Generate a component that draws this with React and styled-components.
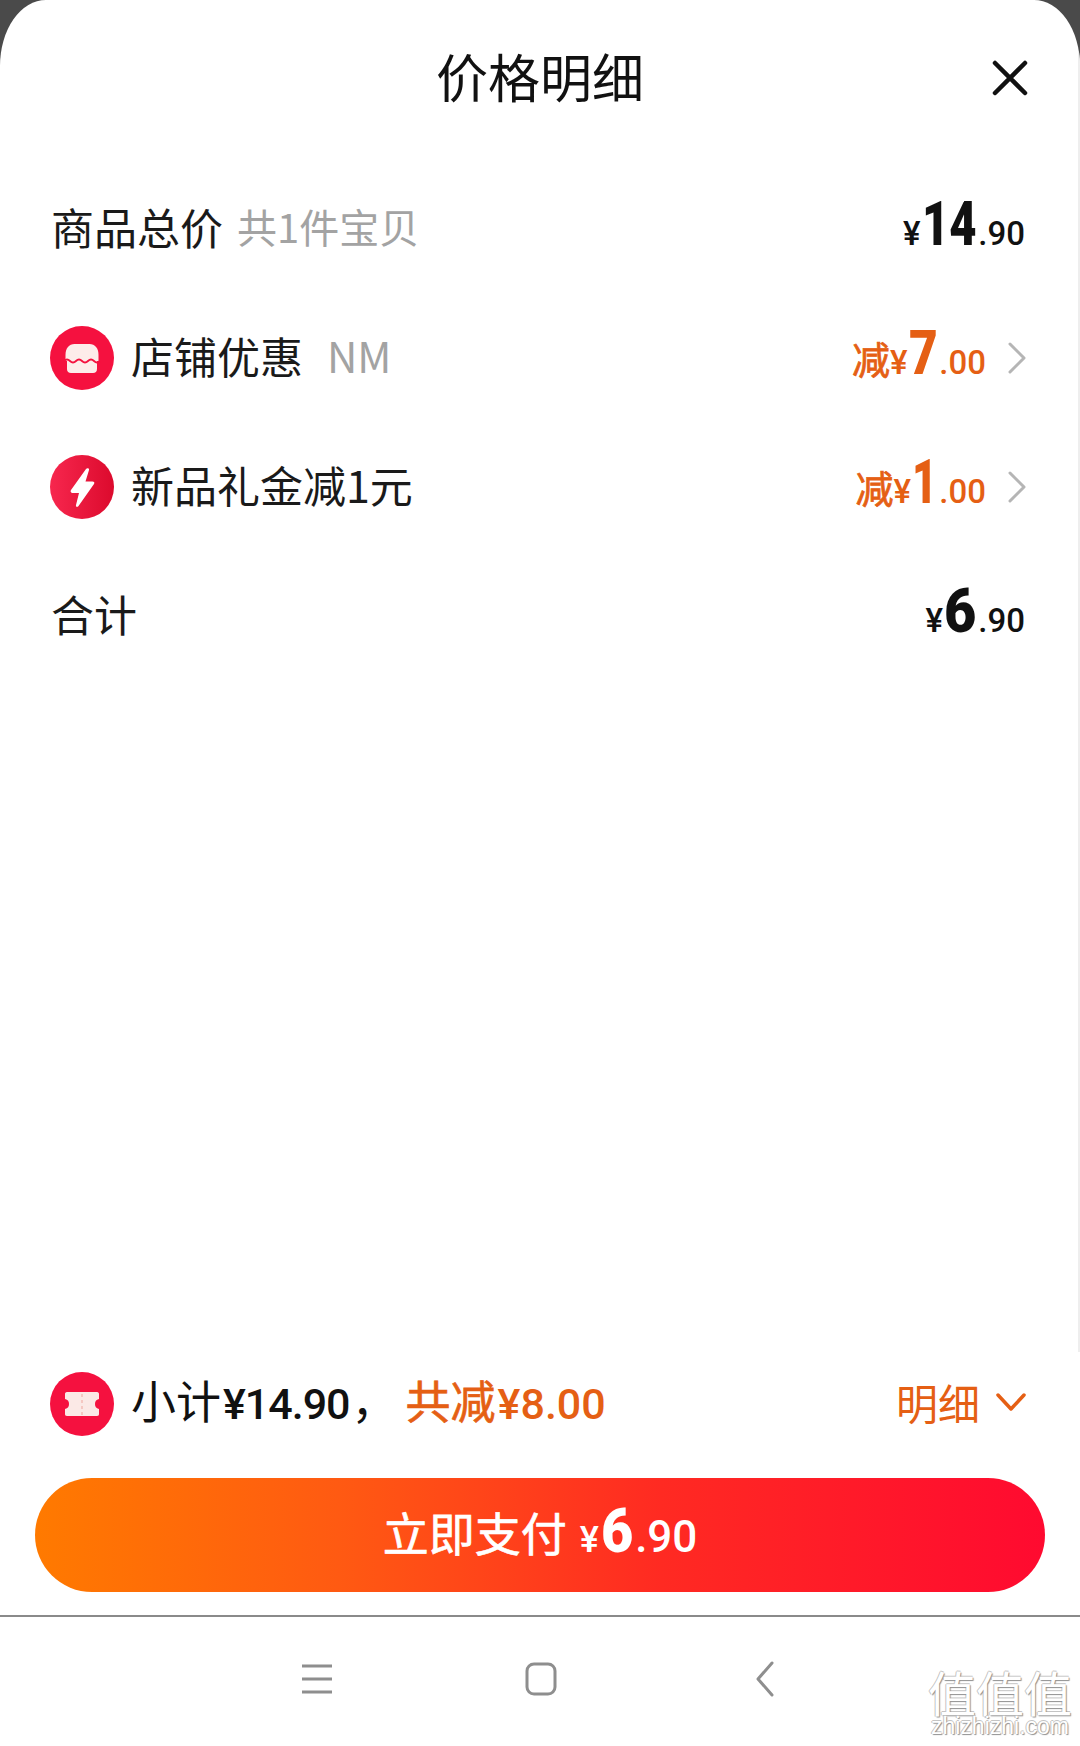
import React from 'react';
import styled, { createGlobalStyle } from 'styled-components';

const GlobalStyle = createGlobalStyle`
  html, body {
    margin: 0;
    padding: 0;
    background: #4a4a4a;
    font-family: "Noto Sans CJK SC", "Noto Sans", sans-serif;
  }
`;

const ORANGE = '#e55f14';
const NUM_FONT = `"Roboto", "Liberation Sans", sans-serif`;

const Sheet = styled.div`
  position: relative;
  width: 1080px;
  height: 1746px;
  box-sizing: border-box;
  background: #fff;
  border-radius: 46px 46px 0 0 / 66px 66px 0 0;
  display: flex;
  flex-direction: column;
  overflow: hidden;

  &::after {
    content: "";
    position: absolute;
    top: 52px;
    right: 0;
    width: 2px;
    height: 1300px;
    background: #eeeeee;
  }
`;

const Header = styled.div`
  height: 164px;
  padding: 0 52px 12px;
  box-sizing: border-box;
  display: flex;
  align-items: center;
  justify-content: center;
  position: relative;
`;

const Title = styled.h1`
  margin: 0;
  font-size: 52px;
  font-weight: 400;
  color: #111;
  line-height: 1;
`;

const CloseBtn = styled.svg`
  position: absolute;
  right: 52px;
  top: 60px;
  width: 36px;
  height: 36px;
`;

const Row = styled.div`
  height: 129px;
  padding: 0 ${p => (p.$chevron ? 54 : 55)}px 0 ${p => (p.$icon ? 50 : 51)}px;
  box-sizing: border-box;
  display: flex;
  align-items: center;
  justify-content: space-between;
`;

const Left = styled.div`
  display: flex;
  align-items: center;
`;

const Right = styled.div`
  display: flex;
  align-items: center;
`;

const Badge = styled.svg`
  width: 64px;
  height: 64px;
  margin-right: 17px;
  flex: none;
`;

const Label = styled.span`
  font-size: 43px;
  color: #1a1a1a;
  line-height: 1;
  padding-bottom: 5px;
`;

const Sub = styled.span`
  font-size: ${p => p.$size || 40}px;
  color: #a3a3a3;
  line-height: 1;
  margin-left: ${p => p.$gap || 14}px;
  padding-bottom: 5px;
`;

const Price = styled.div`
  display: flex;
  align-items: baseline;
  color: ${p => (p.$off ? ORANGE : '#111')};
  font-family: ${NUM_FONT};
  line-height: 1;
  padding-bottom: 9px;
`;

const OffWord = styled.span`
  font-family: "Noto Sans CJK SC", sans-serif;
  font-size: 38px;
  -webkit-text-stroke: 0.8px currentColor;
`;

const Yen = styled.span`
  font-size: ${p => p.$size || 33}px;
  font-weight: 500;
  margin-right: ${p => p.$gap || 1}px;
`;

// the digits in the picture are a condensed face, so squeeze Roboto and pull the box in by the same amount
const Big = styled.span`
  display: inline-block;
  font-size: ${p => p.$size || 62}px;
  font-weight: 900;
  transform: scaleX(${p => p.$k});
  transform-origin: left bottom;
  margin-right: ${p => -(1 - p.$k) * 0.575 * p.$n}em;
`;

const Cents = styled.span`
  font-size: ${p => p.$size || 33}px;
  font-weight: 500;
  margin-left: 2px;
`;

const Chevron = styled.svg`
  width: 18px;
  height: 32px;
  margin-left: 22px;
`;

const Spacer = styled.div`
  flex: 1;
`;

const Summary = styled.div`
  height: 113px;
  margin-bottom: 18px;
  padding: 0 54px 0 50px;
  display: flex;
  align-items: center;
  justify-content: space-between;
`;

const SummaryText = styled.span`
  font-size: 45px;
  color: ${p => (p.$off ? ORANGE : '#111')};
  line-height: 1;
  margin-left: ${p => p.$gap || 0}px;
  padding-bottom: 4px;
  -webkit-text-stroke: ${p => (p.$off ? '0.7px currentColor' : '0')};
`;

const SumNum = styled.span`
  font-family: ${NUM_FONT};
  font-weight: 500;
  font-size: 43px;
  letter-spacing: ${p => p.$space}px;
  margin: 0 2px;
  -webkit-text-stroke: 0;
`;

const DetailLink = styled.div`
  display: flex;
  align-items: center;
  color: ${ORANGE};
  font-size: 42px;
  line-height: 1;
  padding-bottom: 4px;
`;

const DownArrow = styled.svg`
  width: 30px;
  height: 20px;
  margin-left: 16px;
`;

const PayButton = styled.button`
  align-self: center;
  width: 1010px;
  height: 114px;
  border: none;
  border-radius: 57px;
  padding: 0 0 8px;
  background: linear-gradient(90deg, #ff7a00 0%, #ff5a12 30%, #ff2a22 62%, #ff0a30 100%);
  color: #fff;
  font-family: inherit;
  display: flex;
  align-items: center;
  justify-content: center;
`;

const PayLabel = styled.span`
  font-size: 46px;
  line-height: 1;
  margin-right: 13px;
  -webkit-text-stroke: 0.7px currentColor;
`;

const PayPrice = styled.div`
  display: flex;
  align-items: baseline;
  font-family: ${NUM_FONT};
  line-height: 1;
`;

const NavBar = styled.div`
  margin-top: 23px;
  height: 131px;
  padding: 0 0 6px 300px;
  box-sizing: border-box;
  border-top: 2px solid #8a8a8a;
  background: #fff;
  display: flex;
  align-items: center;
  gap: 190px;
  position: relative;
`;

const NavIcon = styled.svg`
  width: 34px;
  height: 36px;
`;

const Watermark = styled.div`
  position: absolute;
  right: 8px;
  bottom: 9px;
  width: 144px;
  text-align: center;
  color: #fff;
  line-height: 1;
  text-shadow: 1px 1px 1px #8f8f8f, -1px 0 0 #c4c4c4, 0 -1px 0 #c4c4c4;
`;

const WatermarkMark = styled.div`
  font-size: 48px;
`;

const WatermarkUrl = styled.div`
  font-family: "Liberation Sans", sans-serif;
  font-size: 23px;
  line-height: 22px;
`;

function Amount({ big, cents, off, word, k, n = 1 }) {
  return (
    <Price $off={off}>
      {word && <OffWord>{word}</OffWord>}
      <Yen>¥</Yen>
      <Big $k={k} $n={n}>{big}</Big>
      <Cents>.{cents}</Cents>
    </Price>
  );
}

function RightChevron() {
  return (
    <Chevron viewBox="0 0 18 32" fill="none" stroke="#b5b5b5" strokeWidth="3" strokeLinecap="round" strokeLinejoin="round">
      <path d="M2 2l14 14L2 30" />
    </Chevron>
  );
}

function ShopBadge() {
  return (
    <Badge viewBox="0 0 64 64">
      <circle cx="32" cy="32" r="32" fill="#f5113f" />
      <path d="M15.500 29c0-7 3.500-11 9-11h15c5.500 0 9 4 9 11v6h-33z" fill="#fdecea" />
      <path d="M17 33h30v10c0 2.500-1.500 4-4 4H21c-2.500 0-4-1.500-4-4z" fill="#fdecea" />
      <path d="M14 35q3-3 6 0t6 0 6 0 6 0 6 0 6 0" fill="none" stroke="#f5113f" strokeWidth="1.800" />
    </Badge>
  );
}

function BoltBadge() {
  return (
    <Badge viewBox="0 0 64 64">
      <defs>
        <linearGradient id="boltBg" x1="0" x2="1" y1="0" y2="0">
          <stop offset="0" stopColor="#f7274e" />
          <stop offset="1" stopColor="#dc0a2d" />
        </linearGradient>
      </defs>
      <circle cx="32" cy="32" r="32" fill="url(#boltBg)" />
      <path d="M36 14L21 35c-1 1.500 0 3 1.500 3H29l-3 12c-.5 2 1.500 2.500 2.500 1L44 29c1-1.500 0-2.500-1.500-2.500H35.500L39 15c.5-2-2-2.500-3-1z" fill="#fff" />
    </Badge>
  );
}

function TicketBadge() {
  return (
    <Badge viewBox="0 0 64 64">
      <circle cx="32" cy="32" r="32" fill="#f5113f" />
      <path d="M17 20h30c1.500 0 2 1 2 2v5c-3 .5-4 2.500-4 5s1 4.500 4 5v5c0 1-.5 2-2 2H17c-1.500 0-2-1-2-2v-5c3-.5 4-2.500 4-5s-1-4.500-4-5v-5c0-1 .5-2 2-2z" fill="#fbe9e6" />
      <path d="M32 22v22" stroke="#f3bdb7" strokeWidth="1.500" strokeDasharray="3 3" />
    </Badge>
  );
}

export default function App() {
  return (
    <>
      <GlobalStyle />
      <Sheet>
        <Header>
          <Title>价格明细</Title>
          <CloseBtn viewBox="0 0 36 36" fill="none" stroke="#111" strokeWidth="4.500" strokeLinecap="round">
            <path d="M3 3l30 30M33 3L3 33" />
          </CloseBtn>
        </Header>

        <Row>
          <Left>
            <Label>商品总价</Label>
            <Sub>共1件宝贝</Sub>
          </Left>
          <Amount big="14" cents="90" k={0.76} n={2} />
        </Row>

        <Row $icon $chevron>
          <Left>
            <ShopBadge />
            <Label>店铺优惠</Label>
            <Sub $size={42} $gap={24}>NM</Sub>
          </Left>
          <Right>
            <Amount off word="减" big="7" cents="00" k={0.8} />
            <RightChevron />
          </Right>
        </Row>

        <Row $icon $chevron>
          <Left>
            <BoltBadge />
            <Label>新品礼金减1元</Label>
          </Left>
          <Right>
            <Amount off word="减" big="1" cents="00" k={0.7} />
            <RightChevron />
          </Right>
        </Row>

        <Row>
          <Label>合计</Label>
          <Amount big="6" cents="90" k={0.9} />
        </Row>

        <Spacer />

        <Summary>
          <Left>
            <TicketBadge />
            <SummaryText>小计<SumNum $space={-1}>¥14.90</SumNum>，</SummaryText>
            <SummaryText $off $gap={9}>共减<SumNum $space={0}>¥8.00</SumNum></SummaryText>
          </Left>
          <DetailLink>
            明细
            <DownArrow viewBox="0 0 30 20" fill="none" stroke={ORANGE} strokeWidth="3.500" strokeLinecap="round" strokeLinejoin="round">
              <path d="M2 3l13 14L28 3" />
            </DownArrow>
          </DetailLink>
        </Summary>

        <PayButton>
          <PayLabel>立即支付</PayLabel>
          <PayPrice>
            <Yen $size={36} $gap={2}>¥</Yen>
            <Big $size={62} $k={0.9} $n={1}>6</Big>
            <Cents $size={44}>.90</Cents>
          </PayPrice>
        </PayButton>

        <NavBar>
          <NavIcon viewBox="0 0 34 36" fill="none" stroke="#8e8e8e" strokeWidth="3">
            <path d="M2 5h30M2 18h30M2 31h30" />
          </NavIcon>
          <NavIcon viewBox="0 0 34 36" fill="none" stroke="#8e8e8e" strokeWidth="3">
            <rect x="3" y="3" width="28" height="30" rx="7" />
          </NavIcon>
          <NavIcon viewBox="0 0 34 36" fill="none" stroke="#8e8e8e" strokeWidth="3" strokeLinecap="round" strokeLinejoin="round">
            <path d="M24 2L10 18l14 16" />
          </NavIcon>
          <Watermark>
            <WatermarkMark>值值值</WatermarkMark>
            <WatermarkUrl>zhizhizhi.com</WatermarkUrl>
          </Watermark>
        </NavBar>
      </Sheet>
    </>
  );
}
